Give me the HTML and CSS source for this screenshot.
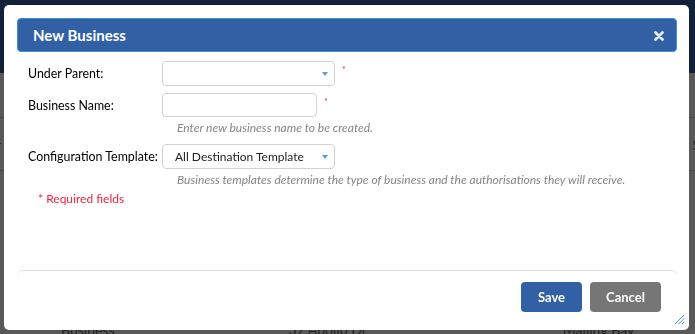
FILE: index.html
```html
<!DOCTYPE html>
<html lang="en">
<head>
  <meta charset="UTF-8" />
  <title>New Business</title>
  <link rel="stylesheet" href="styles.css">
</head>
<body>
  <div class="page">
    <div class="topbar"></div>
    <div class="grid-head">
      <span class="col-a">Er</span>
      <span class="col-d">S</span>
    </div>
    <div class="grid-row">
      <span class="cell c1">Business</span>
      <span class="cell c2">37 Apollo Dr</span>
      <span class="cell c3">Mailing Bay</span>
    </div>
  </div>

  <div class="modal">
    <div class="modal-header">
      <h1>New Business</h1>
      <svg class="close" width="10" height="10" viewBox="0 0 10 10">
        <path d="M1.5 1.5 L8.5 8.5 M8.5 1.5 L1.5 8.5" stroke="#e6edf8" stroke-width="2.8" stroke-linecap="round"/>
      </svg>
    </div>

    <div class="modal-body">
      <div class="form-row">
        <label>Under Parent:</label>
        <div class="select"><span class="arrow"></span></div>
        <span class="req">*</span>
      </div>
      <div class="form-row gap">
        <label>Business Name:</label>
        <div class="input"></div>
        <span class="req">*</span>
      </div>
      <p class="hint">Enter new business name to be created.</p>
      <div class="form-row">
        <label>Configuration Template:</label>
        <div class="select">All Destination Template<span class="arrow"></span></div>
      </div>
      <p class="hint">Business templates determine the type of business and the authorisations they will receive.</p>
      <p class="required">* Required fields</p>
    </div>

    <div class="modal-footer">
      <button class="btn save">Save</button>
      <button class="btn cancel">Cancel</button>
    </div>

    <svg class="resize" width="11" height="11" viewBox="0 0 11 11">
      <path d="M10 1 L1 10 M10 4.5 L4.5 10 M10 8 L8 10" stroke="#4a90dd" stroke-width="1"/>
    </svg>
  </div>
</body>
</html>
```

FILE: styles.css
```css
* {
  margin: 0;
  padding: 0;
  box-sizing: border-box;
}

body {
  background: #595959;
  font-family: 'Lato', 'Liberation Sans', sans-serif;
  overflow: hidden;
  height: 334px;
}

/* page behind the dialog, already dimmed */
.topbar {
  height: 73px;
  background: #12203a;
}

.grid-head {
  margin-top: 44px;
  height: 54px;
  border-top: 1px solid #4b4b4b;
  border-bottom: 1px solid #4b4b4b;
  display: flex;
  align-items: center;
  justify-content: space-between;
  font-size: 14px;
  color: #2c2c2c;
}

.col-a {
  margin-left: -12px;
}

.col-d {
  margin-right: -5px;
}

.grid-row {
  margin-top: 150px;
  height: 20px;
  font-size: 14px;
  color: #222;
  display: flex;
  white-space: nowrap;
}

.cell.c1 { margin-left: 61px; }
.cell.c2 { margin-left: 174px; }
.cell.c3 { margin-left: 196px; }

/* dialog */
.modal {
  position: fixed;
  left: 4px;
  top: 5px;
  width: 685px;
  height: 325px;
  background: #fff;
  border-radius: 5px;
  display: flex;
  flex-direction: column;
}

.modal-header {
  margin: 13px 12px 0 13px;
  height: 34px;
  background: #3160a5;
  border: 1px solid #3d8fd9;
  border-radius: 4px;
  display: flex;
  align-items: center;
  justify-content: space-between;
  padding: 0 12px 0 15px;
}

.modal-header h1 {
  font-size: 15px;
  font-weight: bold;
  color: #fff;
}

.close {
  display: block;
  margin-top: 1px;
}

.modal-body {
  flex: 1;
  padding: 9px 0 0 24px;
}

.form-row {
  display: flex;
  align-items: center;
  height: 25px;
}

.form-row.gap {
  margin-top: 7px;
  height: 24px;
}

.form-row label {
  flex-shrink: 0;
  width: 134px;
  white-space: nowrap;
  font-size: 12.4px;
  color: #000;
}

.select {
  flex-shrink: 0;
  position: relative;
  width: 173px;
  height: 25px;
  border: 1px solid #d2d2d2;
  border-radius: 4px;
  display: flex;
  align-items: center;
  padding-left: 12px;
  white-space: nowrap;
  font-size: 12px;
  color: #222;
}

.arrow {
  position: absolute;
  right: 6px;
  top: 10px;
  border-left: 3.5px solid transparent;
  border-right: 3.5px solid transparent;
  border-top: 4px solid #5b9bd6;
}

.input {
  flex-shrink: 0;
  width: 155px;
  height: 24px;
  border: 1px solid #d2d2d2;
  border-radius: 4px;
}

.req {
  align-self: flex-start;
  margin: 3px 0 0 7px;
  font-size: 9px;
  color: #e8313d;
}

.hint {
  margin: 3px 0 8px 149px;
  line-height: 16px;
  font-size: 12px;
  font-style: italic;
  color: #858585;
}

.required {
  margin: -5px 0 0 10px;
  line-height: 16px;
  font-size: 12px;
  color: #f0233f;
}

.modal-footer {
  margin: 0 12px 0 13px;
  height: 60px;
  border-top: 1px solid #dedede;
  border-radius: 6px 6px 0 0;
  display: flex;
  justify-content: flex-end;
  align-items: flex-start;
  gap: 8px;
  padding: 11px 16px 0 0;
}

.btn {
  height: 30px;
  border: none;
  border-radius: 4px;
  color: #fff;
  font-family: 'Lato', 'Liberation Sans', sans-serif;
  font-size: 13px;
  font-weight: bold;
}

.save {
  width: 61px;
  background: #3160a5;
}

.cancel {
  width: 71px;
  background: #767676;
}

.resize {
  position: absolute;
  right: 4px;
  bottom: 5px;
}
```
